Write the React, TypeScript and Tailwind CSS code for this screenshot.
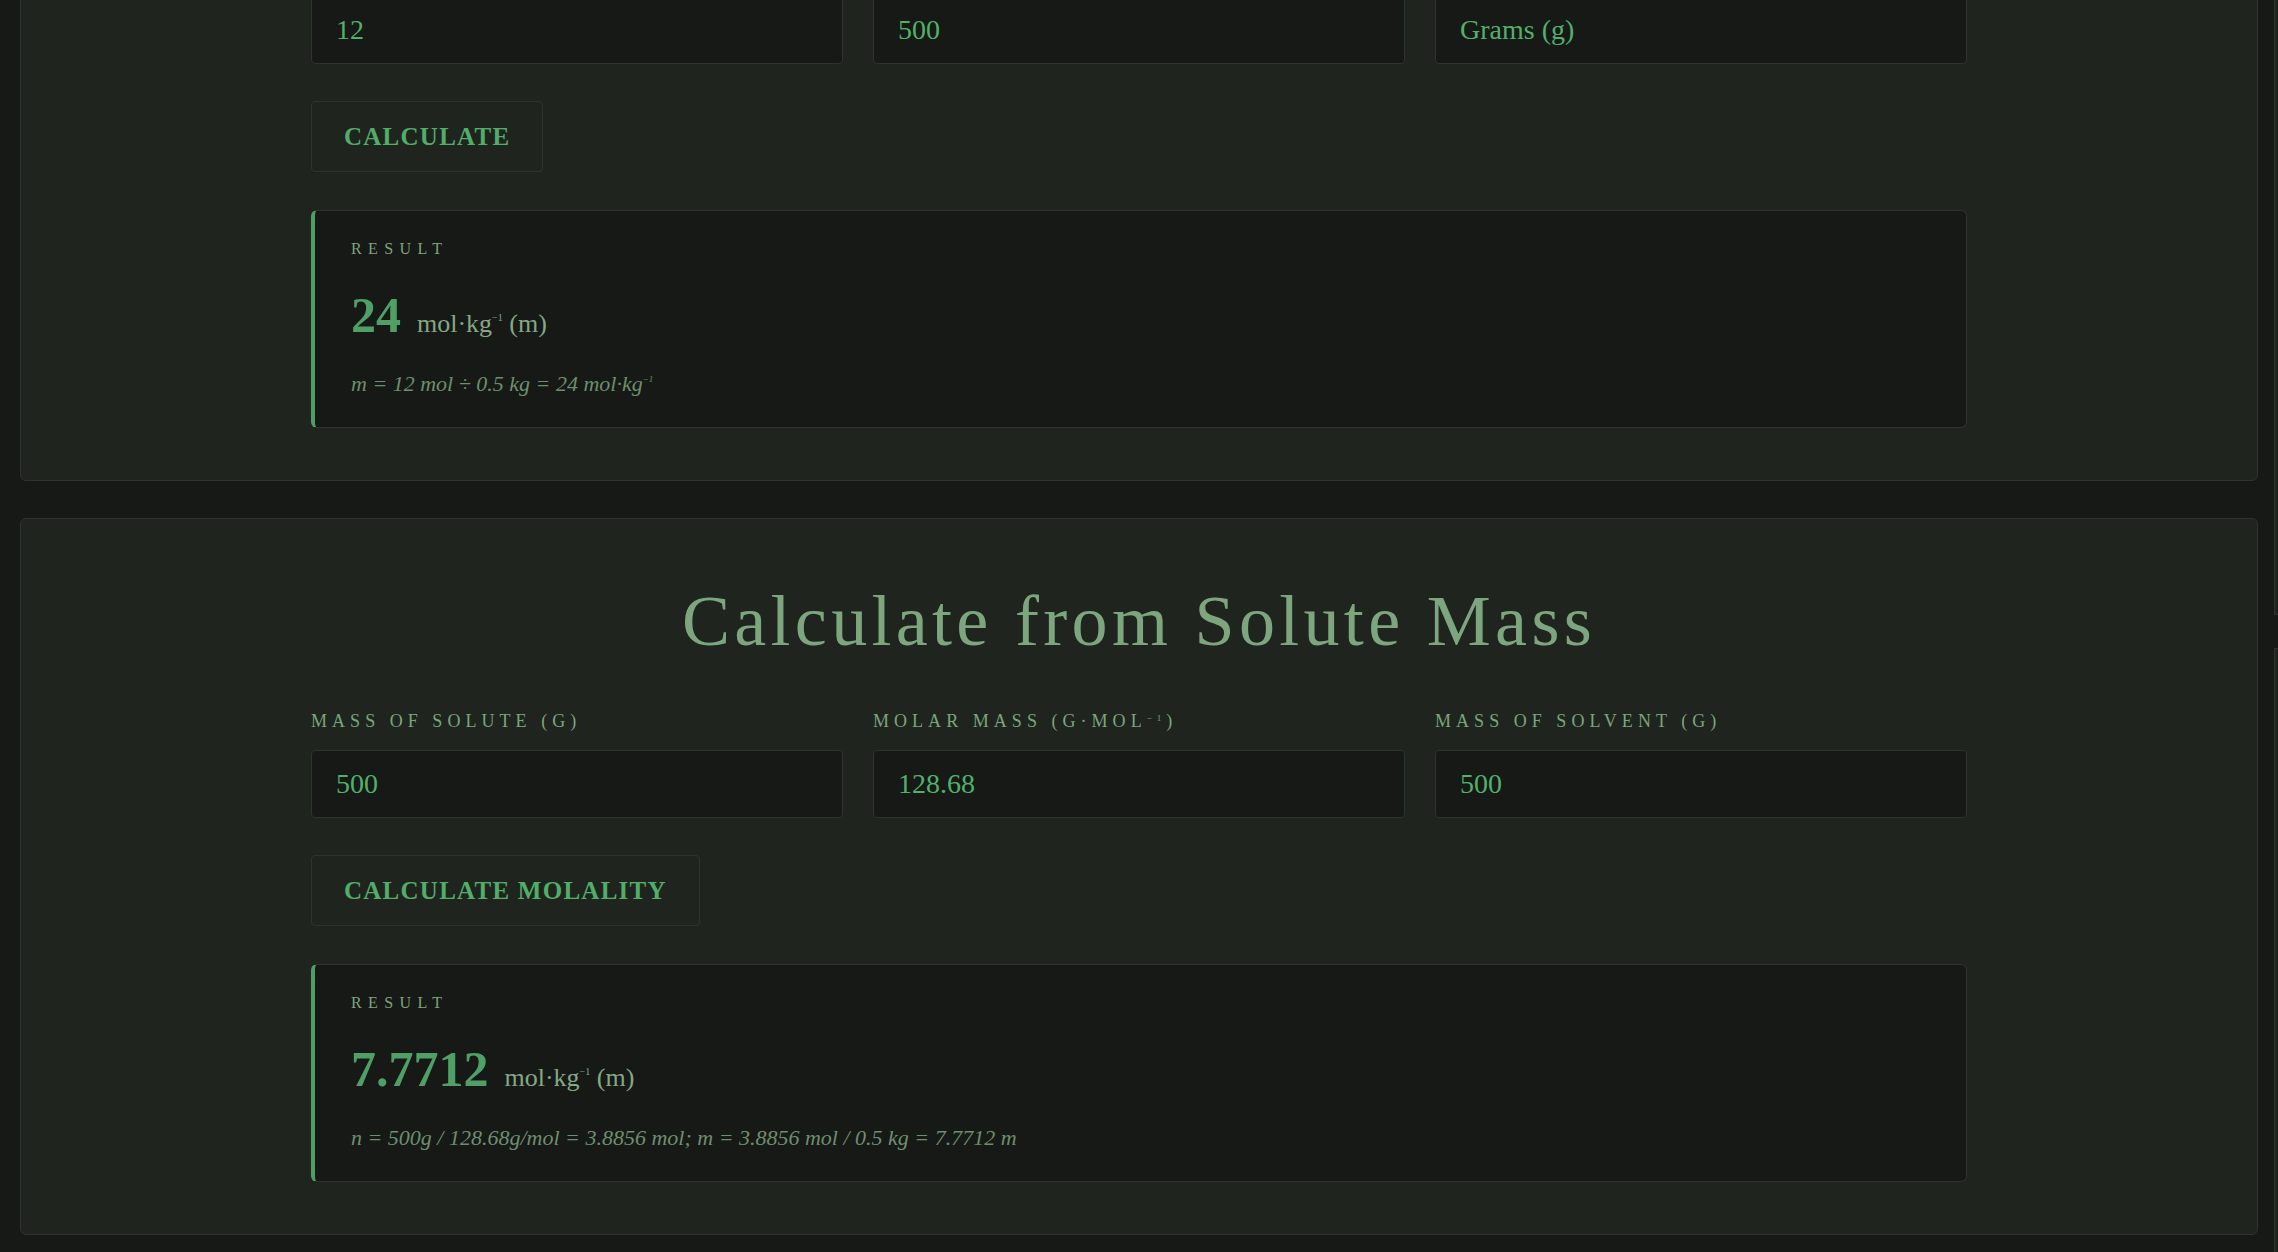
import React from "react";

type Field = { label: React.ReactNode; value: string };

const SERIF = "font-['Liberation_Serif','Times_New_Roman',serif]";

function Unit() {
  return (
    <span className="text-[26px] leading-none text-[#85a885]">
      mol·kg<sup className="relative -top-[11px] text-[10px]">−1</sup> (m)
    </span>
  );
}

function ResultBox({ value, formula }: { value: string; formula: React.ReactNode }) {
  return (
    <div className="mt-[38px] rounded-md border border-[#2d332d] border-l-4 border-l-[#4e9e66] bg-[#161915] pl-[36px] pr-8 pt-[26px] pb-[27px]">
      <div className="text-[16px] leading-[24px] uppercase tracking-[0.4em] text-[#7ea47f]">Result</div>
      <div className="mt-[29px] flex items-baseline gap-4">
        <span className="text-[50px] leading-none font-bold text-[#4f9f66]">{value}</span>
        <Unit />
      </div>
      <div className="mt-[27px] text-[22px] leading-[33px] italic text-[#6e8e70]">{formula}</div>
    </div>
  );
}

function Calculator({
  title,
  fields,
  button,
  value,
  formula,
}: {
  title: string;
  fields: Field[];
  button: string;
  value: string;
  formula: React.ReactNode;
}) {
  return (
    <section className="rounded-md border border-[#2d332d] bg-[#1f241f] px-8 pt-[59px] pb-[52px]">
      <div className="mx-auto max-w-[1656px]">
        <h2 className="text-center text-[72px] leading-[1.2] tracking-[0.06em] text-[#7da67e]">{title}</h2>
        <div className="mt-[43px] grid grid-cols-3 gap-[30px]">
          {fields.map((f, i) => (
            <div key={i}>
              <div className="mb-[15px] text-[18px] leading-[27px] uppercase tracking-[0.28em] text-[#7aa67c]">
                {f.label}
              </div>
              <div className="flex h-[68px] items-center rounded border border-[#2d332d] bg-[#161915] px-6 text-[28px] text-[#52b06b]">
                {f.value}
              </div>
            </div>
          ))}
        </div>
        <button className="mt-[37px] h-[71px] rounded border border-[#2d332d] bg-transparent px-8 text-[25px] font-bold uppercase tracking-[0.05em] text-[#52ad68]">
          {button}
        </button>
        <ResultBox value={value} formula={formula} />
      </div>
    </section>
  );
}

export default function App() {
  return (
    <div className={`relative h-[1252px] overflow-hidden bg-[#161915] px-5 ${SERIF}`}>
      <div className="-mt-[235px] flex flex-col gap-[37px]">
        <Calculator
          title="Calculate from Moles"
          fields={[
            { label: "Moles of solute (mol)", value: "12" },
            { label: "Mass of solvent", value: "500" },
            { label: "Solvent unit", value: "Grams (g)" },
          ]}
          button="Calculate"
          value="24"
          formula={
            <>
              m = 12 mol ÷ 0.5 kg = 24 mol·kg<sup className="relative -top-[9px] text-[9px]">−1</sup>
            </>
          }
        />
        <Calculator
          title="Calculate from Solute Mass"
          fields={[
            { label: "Mass of solute (g)", value: "500" },
            {
              label: (
                <>
                  Molar mass (g·mol<sup className="relative -top-[6px] text-[9px]">−1</sup>)
                </>
              ),
              value: "128.68",
            },
            { label: "Mass of solvent (g)", value: "500" },
          ]}
          button="Calculate Molality"
          value="7.7712"
          formula="n = 500g / 128.68g/mol = 3.8856 mol; m = 3.8856 mol / 0.5 kg = 7.7712 m"
        />
      </div>
      {/* sliver of an off-screen panel on the right edge */}
      <div className="absolute right-0 top-0 h-[615px] w-[4px] border-b border-l border-[#2d332d] bg-[#1f241f]" />
      <div className="absolute right-0 top-[648px] bottom-0 w-[4px] border-t border-l border-[#2d332d] bg-[#1f241f]" />
    </div>
  );
}
